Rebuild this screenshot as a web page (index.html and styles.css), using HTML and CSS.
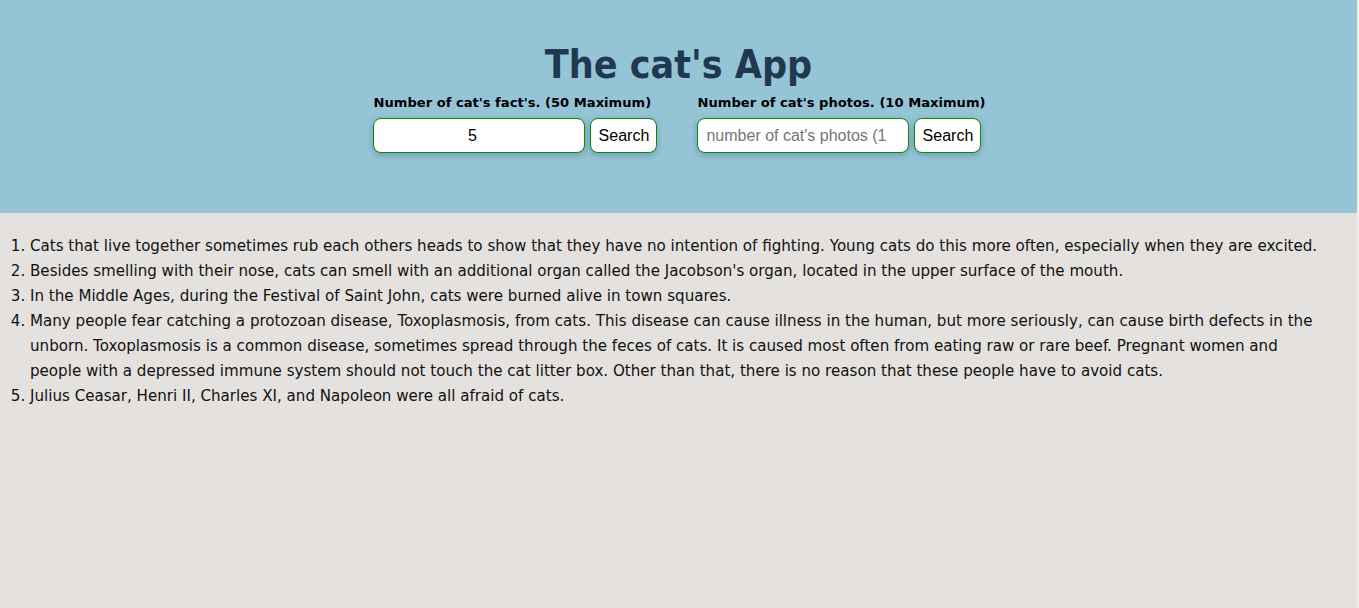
FILE: index.html
```html
<!DOCTYPE html>
<html lang="en">
<head>
<meta charset="utf-8">
<title>The cat's App</title>
<link rel="stylesheet" href="styles.css">
</head>
<body>
<header class="header">
  <h1 class="title">The cat's App</h1>
  <div class="forms">
    <div class="group">
      <label class="label">Number of cat's fact's. (50 Maximum)</label>
      <div class="row">
        <input class="field field-center" type="text" value="5">
        <button class="btn">Search</button>
      </div>
    </div>
    <div class="group">
      <label class="label">Number of cat's photos. (10 Maximum)</label>
      <div class="row">
        <input class="field field-clip" type="text" placeholder="number of cat's photos (1 to 10)">
        <button class="btn">Search</button>
      </div>
    </div>
  </div>
</header>
<main class="content">
  <ol class="facts">
    <li>Cats that live together sometimes rub each others heads to show that they have no intention of fighting. Young cats do this more often, especially when they are excited.</li>
    <li>Besides smelling with their nose, cats can smell with an additional organ called the Jacobson's organ, located in the upper surface of the mouth.</li>
    <li>In the Middle Ages, during the Festival of Saint John, cats were burned alive in town squares.</li>
    <li>Many people fear catching a protozoan disease, Toxoplasmosis, from cats. This disease can cause illness in the human, but more seriously, can cause birth defects in the unborn. Toxoplasmosis is a common disease, sometimes spread through the feces of cats. It is caused most often from eating raw or rare beef. Pregnant women and people with a depressed immune system should not touch the cat litter box. Other than that, there is no reason that these people have to avoid cats.</li>
    <li>Julius Ceasar, Henri II, Charles XI, and Napoleon were all afraid of cats.</li>
  </ol>
</main>
</body>
</html>
```
FILE: styles.css
```css
html {
  margin: 0;
  padding: 0;
  background: #f1f0ef;
}
body {
  margin: 0 2px 0 0;
  padding: 0;
  background: #e4e1de;
  font-family: "DejaVu Sans", Verdana, sans-serif;
  color: #000;
  min-height: 608px;
}
.header {
  background: #96c4d7;
  height: 213px;
  box-sizing: border-box;
  padding-top: 40px;
  display: flex;
  flex-direction: column;
  align-items: center;
}
.title {
  margin: 0;
  font-family: "DejaVu Sans Condensed", "DejaVu Sans", sans-serif;
  font-stretch: condensed;
  font-size: 39px;
  line-height: 50px;
  font-weight: bold;
  color: #1f3a50;
}
.forms {
  display: flex;
  gap: 40px;
  margin-top: 5px;
  margin-left: 2px;
}
.group {
  display: flex;
  flex-direction: column;
}
.label {
  font-size: 13.1px;
  font-weight: bold;
  line-height: 16px;
  margin-bottom: 7px;
}
.row {
  display: flex;
  gap: 5px;
}
.field {
  width: 212px;
  height: 35px;
  box-sizing: border-box;
  border: 1px solid #0a8a0a;
  border-radius: 8px;
  background: #fff;
  font-family: "Liberation Sans", Arial, sans-serif;
  font-size: 16px;
  padding: 0 8px;
  color: #000;
  box-shadow: 0 2px 6px rgba(40, 70, 90, 0.35);
}
.field::placeholder {
  color: #767676;
}
.field-center {
  text-align: center;
  padding-right: 22px;
}
.field-clip {
  padding-right: 20px;
}
.btn {
  width: 67px;
  height: 35px;
  box-sizing: border-box;
  border: 1px solid #0a8a0a;
  border-radius: 8px;
  background: #fff;
  font-family: "Liberation Sans", Arial, sans-serif;
  font-size: 16px;
  color: #000;
  padding: 0;
  box-shadow: 0 2px 6px rgba(40, 70, 90, 0.35);
}
.content {
  padding: 21px 28px 0 0;
}
.facts {
  margin: 0;
  padding-left: 30px;
  font-size: 15.1px;
  line-height: 25px;
  color: #111;
}
```
